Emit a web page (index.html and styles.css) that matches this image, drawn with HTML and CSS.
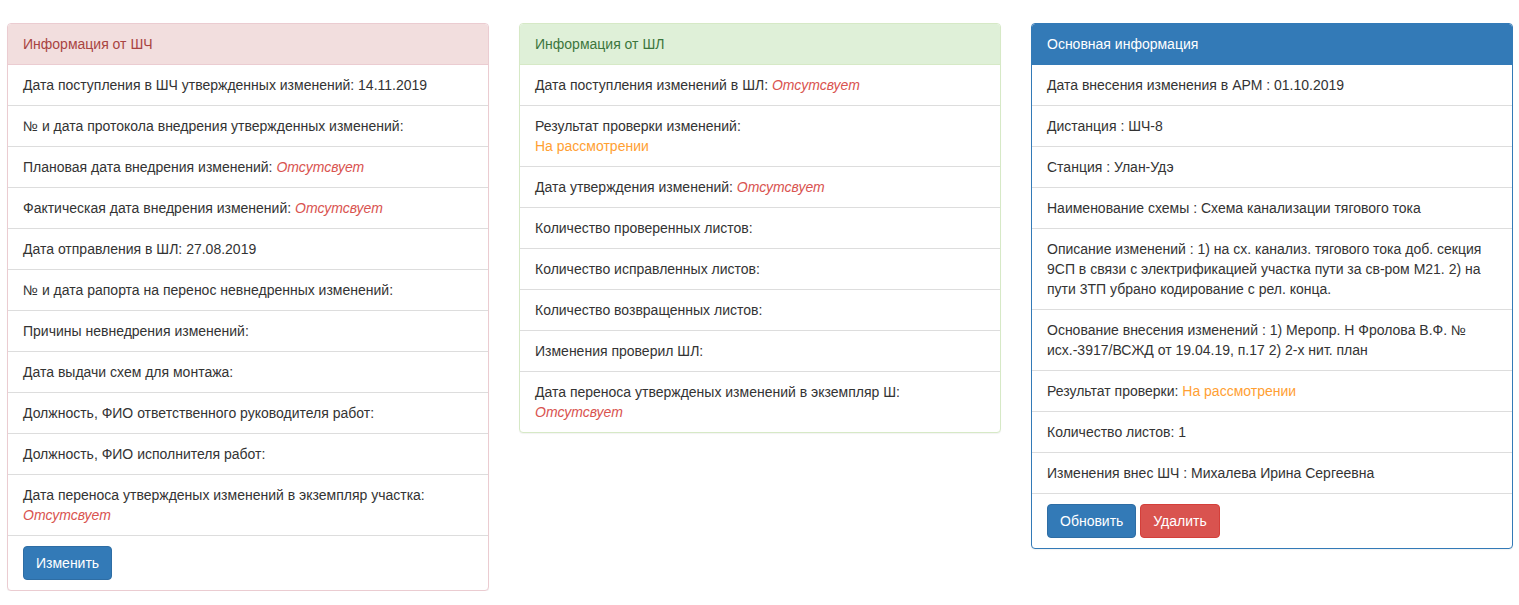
FILE: index.html
```html
<!DOCTYPE html>
<html lang="ru">
<head>
<meta charset="utf-8">
<link rel="stylesheet" href="styles.css">
</head>
<body>
<div class="grid">
  <div class="panel panel-danger">
    <div class="panel-heading">Информация от ШЧ</div>
    <ul class="list">
      <li>Дата поступления в ШЧ утвержденных изменений: 14.11.2019</li>
      <li>№ и дата протокола внедрения утвержденных изменений:</li>
      <li>Плановая дата внедрения изменений: <em class="absent">Отсутсвует</em></li>
      <li>Фактическая дата внедрения изменений: <em class="absent">Отсутсвует</em></li>
      <li>Дата отправления в ШЛ: 27.08.2019</li>
      <li>№ и дата рапорта на перенос невнедренных изменений:</li>
      <li>Причины невнедрения изменений:</li>
      <li>Дата выдачи схем для монтажа:</li>
      <li>Должность, ФИО ответственного руководителя работ:</li>
      <li>Должность, ФИО исполнителя работ:</li>
      <li>Дата переноса утвержденых изменений в экземпляр участка: <em class="absent">Отсутсвует</em></li>
      <li class="actions"><button class="btn btn-primary">Изменить</button></li>
    </ul>
  </div>
  <div class="panel panel-success">
    <div class="panel-heading">Информация от ШЛ</div>
    <ul class="list">
      <li>Дата поступления изменений в ШЛ: <em class="absent">Отсутсвует</em></li>
      <li>Результат проверки изменений:<span class="pending block">На рассмотрении</span></li>
      <li>Дата утверждения изменений: <em class="absent">Отсутсвует</em></li>
      <li>Количество проверенных листов:</li>
      <li>Количество исправленных листов:</li>
      <li>Количество возвращенных листов:</li>
      <li>Изменения проверил ШЛ:</li>
      <li>Дата переноса утвержденых изменений в экземпляр Ш: <em class="absent">Отсутсвует</em></li>
    </ul>
  </div>
  <div class="panel panel-primary">
    <div class="panel-heading">Основная информация</div>
    <ul class="list">
      <li>Дата внесения изменения в АРМ : 01.10.2019</li>
      <li>Дистанция : ШЧ-8</li>
      <li>Станция : Улан-Удэ</li>
      <li>Наименование схемы : Схема канализации тягового тока</li>
      <li>Описание изменений : 1) на сх. канализ. тягового тока доб. секция 9СП в связи с электрификацией участка пути за св-ром М21. 2) на пути 3ТП убрано кодирование с рел. конца.</li>
      <li>Основание внесения изменений : 1) Меропр. Н Фролова В.Ф. № исх.-3917/ВСЖД от 19.04.19, п.17 2) 2-х нит. план</li>
      <li>Результат проверки: <span class="pending">На рассмотрении</span></li>
      <li>Количество листов: 1</li>
      <li>Изменения внес ШЧ : Михалева Ирина Сергеевна</li>
      <li class="actions"><button class="btn btn-primary">Обновить</button> <button class="btn btn-danger">Удалить</button></li>
    </ul>
  </div>
</div>
</body>
</html>
```
FILE: styles.css
```css
* { box-sizing: border-box; }
html, body { margin: 0; padding: 0; background: #fff; }
body {
  font-family: "Liberation Sans", Arial, sans-serif;
  font-size: 14px;
  line-height: 20px;
  color: #333;
}
.grid {
  display: grid;
  grid-template-columns: 482px 482px 482px;
  column-gap: 30px;
  align-items: start;
  padding: 23px 0 0 7px;
}
.panel {
  border: 1px solid #ddd;
  border-radius: 4px;
  background: #fff;
  box-shadow: 0 1px 1px rgba(0,0,0,.05);
  overflow: hidden;
}
.panel-heading {
  padding: 10px 15px;
  border-bottom: 1px solid transparent;
  border-radius: 3px 3px 0 0;
}
.panel-danger { border-color: #ebccd1; }
.panel-danger .panel-heading { background: #f2dede; color: #a94442; border-bottom-color: #ebccd1; }
.panel-success { border-color: #d6e9c6; }
.panel-success .panel-heading { background: #dff0d8; color: #3c763d; border-bottom-color: #d6e9c6; }
.panel-primary { border-color: #337ab7; }
.panel-primary .panel-heading { background: #337ab7; color: #fff; border-bottom-color: #337ab7; }
.list { list-style: none; margin: 0; padding: 0; }
.list li {
  padding: 10px 15px;
  border-top: 1px solid #ddd;
}
.list li:first-child { border-top: 0; }
.absent { color: #d9534f; font-style: italic; }
.pending { color: #ffa033; }
.block { display: block; }
.btn {
  display: inline-block;
  font-family: inherit;
  font-size: 14px;
  line-height: 20px;
  padding: 6px 12px;
  border: 1px solid transparent;
  border-radius: 4px;
  color: #fff;
  cursor: pointer;
  margin: 0;
}
.btn-primary { background: #337ab7; border-color: #2e6da4; }
.btn-danger { background: #d9534f; border-color: #d43f3a; }
```
